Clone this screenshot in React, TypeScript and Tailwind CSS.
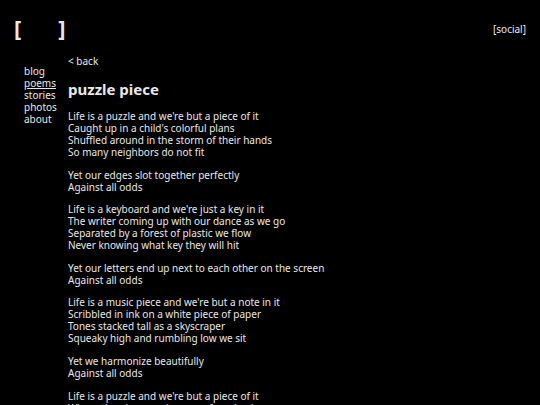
import React from 'react';

const stanzas: string[][] = [
  [
    "Life is a puzzle and we're but a piece of it",
    "Caught up in a child's colorful plans",
    'Shuffled around in the storm of their hands',
    'So many neighbors do not fit',
  ],
  ['Yet our edges slot together perfectly', 'Against all odds'],
  [
    "Life is a keyboard and we're just a key in it",
    'The writer coming up with our dance as we go',
    'Separated by a forest of plastic we flow',
    'Never knowing what key they will hit',
  ],
  ['Yet our letters end up next to each other on the screen', 'Against all odds'],
  [
    "Life is a music piece and we're but a note in it",
    'Scribbled in ink on a white piece of paper',
    'Tones stacked tall as a skyscraper',
    'Squeaky high and rumbling low we sit',
  ],
  ['Yet we harmonize beautifully', 'Against all odds'],
  ["Life is a puzzle and we're but a piece of it", 'Where the pieces go is none of our business'],
];

const nav = ['blog', 'poems', 'stories', 'photos', 'about'];

export default function App() {
  return (
    <div className="h-[405px] w-[540px] overflow-hidden bg-black text-[#e8e8e8] font-['Noto_Sans',sans-serif]">
      <header className="flex items-start justify-between px-[14px] pt-[13px]">
        <div className="flex gap-[37px] text-[22px] font-bold leading-[28px]">
          <span>[</span>
          <span>]</span>
        </div>
        <a className="mt-[9px] text-[10px] leading-[14px]">[social]</a>
      </header>
      <div className="mt-[14px] flex">
        <nav className="w-[68px] pl-[24px] pt-[10px] text-[10px] leading-[12px]">
          {nav.map((n) => (
            <div key={n} className={n === 'poems' ? 'underline' : ''}>
              {n}
            </div>
          ))}
        </nav>
        <main className="text-[10px] leading-[12px]">
          <div>&lt; back</div>
          <h1 className="mt-[12px] text-[15px] font-bold leading-[20px]">puzzle piece</h1>
          <div className="mt-[11px] space-y-[10.6px]">
            {stanzas.map((s, i) => (
              <p key={i}>
                {s.map((l, j) => (
                  <span key={j} className="block">
                    {l}
                  </span>
                ))}
              </p>
            ))}
          </div>
        </main>
      </div>
    </div>
  );
}
